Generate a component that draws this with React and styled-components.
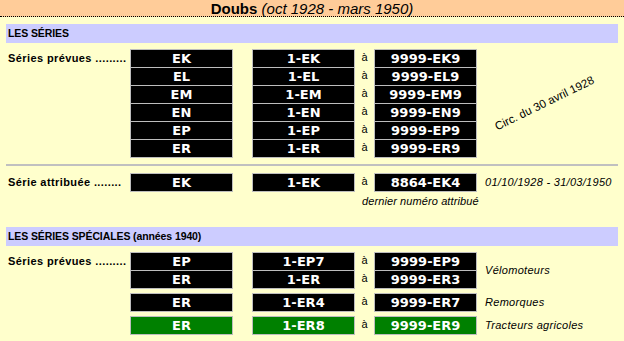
import React from 'react';
import styled, { createGlobalStyle } from 'styled-components';

const Global = createGlobalStyle`
  html, body { margin: 0; padding: 0; background: #FFFFCC; }
  body { font-family: "Liberation Sans", Arial, sans-serif; color: #000; }
`;

const Page = styled.div`
  width: 624px;
  min-height: 341px;
  background: #FFFFCC;
`;

const Header = styled.header`
  height: 16px;
  background: #FFCC99;
  border-bottom: 1px dotted #000;
  text-align: center;
  font-size: 15px;
  line-height: 17px;
  white-space: nowrap;
`;

const Title = styled.b`
  font-weight: bold;
`;

const Period = styled.i`
  font-style: italic;
  font-weight: normal;
`;

const Content = styled.main`
  padding: 0 6px;
`;

const SectionBar = styled.div`
  margin-top: ${p => p.$top}px;
  height: 19px;
  background: #CCCCFF;
  padding-left: 2px;
  font-weight: bold;
  font-size: 10.5px;
  letter-spacing: -0.1px;
  line-height: 19px;
  white-space: nowrap;
`;

const Block = styled.div`
  display: grid;
  grid-template-columns: 124px 103px 19px 103px 19px 103px 1fr;
  grid-auto-rows: 18px;
  margin-top: ${p => p.$top || 0}px;
`;

const Label = styled.div`
  grid-column: 1;
  padding-left: 2px;
  font-weight: bold;
  font-size: 11px;
  letter-spacing: 0.4px;
  line-height: 18px;
  white-space: nowrap;
`;

const Plate = styled.div`
  grid-column: ${p => p.$col};
  box-sizing: border-box;
  height: 19px;
  background: ${p => (p.$green ? '#008000' : '#000')};
  border: 1px solid #BDBDBD;
  color: #fff;
  font-family: "DejaVu Sans", Verdana, sans-serif;
  font-weight: bold;
  font-size: 13px;
  line-height: 17px;
  text-align: center;
  white-space: nowrap;
`;

const A = styled.div`
  grid-column: 5;
  font-size: 11px;
  line-height: 17px;
  text-align: center;
`;

const Note = styled.div`
  grid-column: ${p => p.$span ? `${p.$col || 7} / span ${p.$span}` : (p.$col || 7)};
  grid-row: ${p => (p.$rows ? `span ${p.$rows}` : 'auto')};
  display: flex;
  align-items: center;
  padding-left: ${p => p.$pad ?? 8}px;
  padding-top: ${p => p.$padTop || 0}px;
  font-size: 11px;
  font-style: italic;
  letter-spacing: ${p => p.$ls ?? 0.3}px;
  white-space: nowrap;
`;

const RotatedCell = styled.div`
  grid-column: 7;
  grid-row: 1 / span 6;
  display: flex;
  align-items: center;
  justify-content: center;
  padding-right: 6px;
`;

const Rotated = styled.span`
  display: inline-block;
  transform: rotate(-26deg);
  font-size: 11.5px;
  white-space: nowrap;
`;

const Divider = styled.hr`
  margin: 7px 0 0;
  height: 2px;
  border: 0;
  background: #C0C0C0;
`;

const planned = [
  ['EK', '1-EK', '9999-EK9'],
  ['EL', '1-EL', '9999-EL9'],
  ['EM', '1-EM', '9999-EM9'],
  ['EN', '1-EN', '9999-EN9'],
  ['EP', '1-EP', '9999-EP9'],
  ['ER', '1-ER', '9999-ER9'],
];

function Series({ row, green }) {
  return (
    <>
      <Plate $col={2} $green={green}>{row[0]}</Plate>
      <Plate $col={4} $green={green}>{row[1]}</Plate>
      <A>à</A>
      <Plate $col={6} $green={green}>{row[2]}</Plate>
    </>
  );
}

export default function App() {
  return (
    <Page>
      <Global />
      <Header>
        <Title>Doubs</Title> <Period>(oct 1928 - mars 1950)</Period>
      </Header>
      <Content>
        <SectionBar $top={7}>LES SÉRIES</SectionBar>
        <Block $top={6}>
          {planned.map((r, i) => (
            <React.Fragment key={r[0]}>
              {i === 0 && <Label>Séries prévues .........</Label>}
              <Series row={r} />
              {i === 0 && (
                <RotatedCell>
                  <Rotated>Circ. du 30 avril 1928</Rotated>
                </RotatedCell>
              )}
            </React.Fragment>
          ))}
        </Block>
        <Divider />
        <Block $top={7}>
          <Label>Série attribuée ........</Label>
          <Series row={['EK', '1-EK', '8864-EK4']} />
          <Note>01/10/1928 - 31/03/1950</Note>
          <Note $col={5} $span={3} $pad={7} $padTop={2} $ls={0.1}>dernier numéro attribué</Note>
        </Block>
        <SectionBar $top={18}>LES SÉRIES SPÉCIALES (années 1940)</SectionBar>
        <Block $top={6}>
          <Label>Séries prévues .........</Label>
          <Series row={['EP', '1-EP7', '9999-EP9']} />
          <Note $rows={2}>Vélomoteurs</Note>
          <Series row={['ER', '1-ER', '9999-ER3']} />
        </Block>
        <Block $top={5}>
          <Series row={['ER', '1-ER4', '9999-ER7']} />
          <Note>Remorques</Note>
        </Block>
        <Block $top={5}>
          <Series row={['ER', '1-ER8', '9999-ER9']} green />
          <Note>Tracteurs agricoles</Note>
        </Block>
      </Content>
    </Page>
  );
}
